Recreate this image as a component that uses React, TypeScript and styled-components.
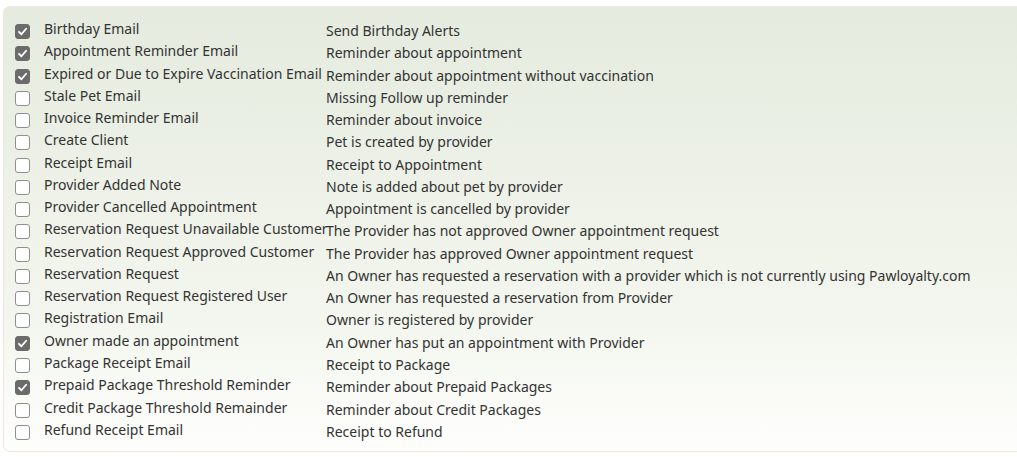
import { Fragment } from "react";
import styled, { createGlobalStyle } from "styled-components";

interface NoticeRow {
    name: string;
    description: string;
    enabled: boolean;
}

const rows: NoticeRow[] = [
    { name: "Birthday Email", description: "Send Birthday Alerts", enabled: true },
    { name: "Appointment Reminder Email", description: "Reminder about appointment", enabled: true },
    { name: "Expired or Due to Expire Vaccination Email", description: "Reminder about appointment without vaccination", enabled: true },
    { name: "Stale Pet Email", description: "Missing Follow up reminder", enabled: false },
    { name: "Invoice Reminder Email", description: "Reminder about invoice", enabled: false },
    { name: "Create Client", description: "Pet is created by provider", enabled: false },
    { name: "Receipt Email", description: "Receipt to Appointment", enabled: false },
    { name: "Provider Added Note", description: "Note is added about pet by provider", enabled: false },
    { name: "Provider Cancelled Appointment", description: "Appointment is cancelled by provider", enabled: false },
    { name: "Reservation Request Unavailable Customer", description: "The Provider has not approved Owner appointment request", enabled: false },
    { name: "Reservation Request Approved Customer", description: "The Provider has approved Owner appointment request", enabled: false },
    { name: "Reservation Request", description: "An Owner has requested a reservation with a provider which is not currently using Pawloyalty.com", enabled: false },
    { name: "Reservation Request Registered User", description: "An Owner has requested a reservation from Provider", enabled: false },
    { name: "Registration Email", description: "Owner is registered by provider", enabled: false },
    { name: "Owner made an appointment", description: "An Owner has put an appointment with Provider", enabled: true },
    { name: "Package Receipt Email", description: "Receipt to Package", enabled: false },
    { name: "Prepaid Package Threshold Reminder", description: "Reminder about Prepaid Packages", enabled: true },
    { name: "Credit Package Threshold Remainder", description: "Reminder about Credit Packages", enabled: false },
    { name: "Refund Receipt Email", description: "Receipt to Refund", enabled: false },
];

const GlobalStyle = createGlobalStyle`
    html, body {
        margin: 0;
        padding: 0;
        background: #ffffff;
        overflow: hidden;
    }
    body {
        font-family: "Noto Sans", "Open Sans", sans-serif;
        color: #333333;
    }
`

const Page = styled.div`
    width: 1017px;
    height: 457px;
    padding: 6px 0 0 3px;
    box-sizing: border-box;
`

const Panel = styled.div`
    width: 1040px;
    height: 446px;
    box-sizing: border-box;
    border: 1px solid #efe6de;
    border-radius: 7px;
    background: linear-gradient(to bottom, #e5ebdf 0%, #f3f6ee 70%, #fefefc 100%);
    padding: 13px 0 0 11px;
`

const List = styled.div`
    display: grid;
    grid-template-columns: 15px 282px auto;
    column-gap: 14px;
    grid-auto-rows: 22.28px;
    align-items: start;
`

const Check = styled.span<{ $on: boolean }>`
    width: 15px;
    height: 15px;
    margin-top: 4px;
    box-sizing: border-box;
    border-radius: 3px;
    border: 1px solid ${props => props.$on ? "#6b6b6b" : "#8f8f8f"};
    background: ${props => props.$on ? "#6b6b6b" : "#ffffff"};
    display: flex;
    align-items: center;
    justify-content: center;
`

const Label = styled.span`
    font-size: 14px;
    line-height: 19px;
    white-space: nowrap;
    margin-top: -1px;
`

const Description = styled.span`
    font-size: 14px;
    line-height: 19px;
    white-space: nowrap;
    padding-top: 1px;
    margin-left: -14px;
`

const App = () => {
    return (
        <>
            <GlobalStyle />
            <Page>
                <Panel>
                    <List>
                        {rows.map((row) => (
                            <Fragment key={row.name}>
                                <Check $on={row.enabled}>
                                    {row.enabled && (
                                        <svg width="11" height="11" viewBox="0 0 10 10">
                                            <path d="M1.8 5.3 L4 7.5 L8.3 2.5" fill="none" stroke="#ffffff" strokeWidth="1.7" strokeLinecap="round" strokeLinejoin="round" />
                                        </svg>
                                    )}
                                </Check>
                                <Label>{row.name}</Label>
                                <Description>{row.description}</Description>
                            </Fragment>
                        ))}
                    </List>
                </Panel>
            </Page>
        </>
    );
};

export default App;
